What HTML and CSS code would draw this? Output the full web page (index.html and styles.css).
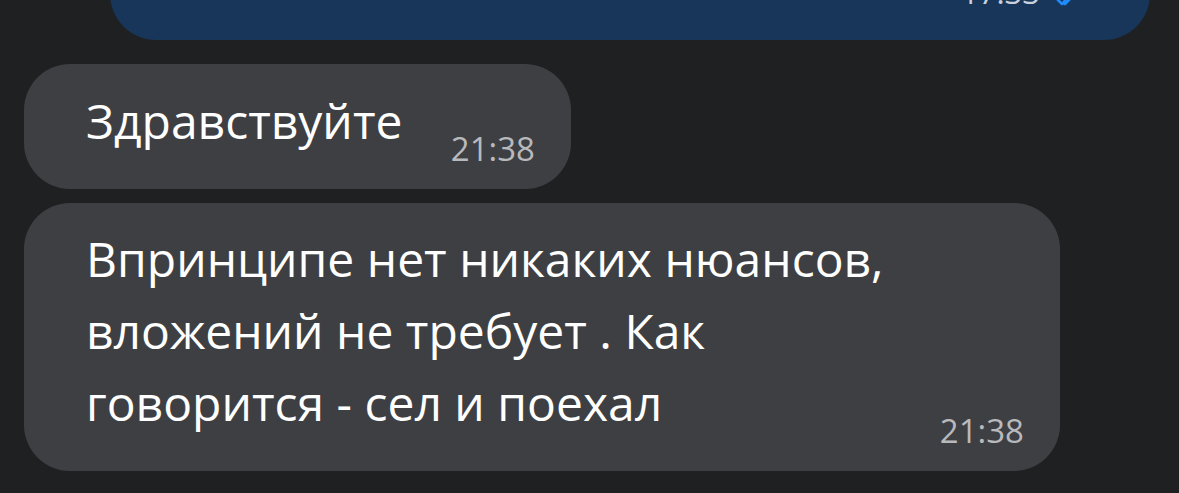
FILE: index.html
```html
<!DOCTYPE html>
<html lang="ru">
<head>
<meta charset="utf-8">
<link rel="stylesheet" href="styles.css">
</head>
<body>
<div class="chat">
  <div class="bubble out">
    <div class="meta out-meta">
      <span class="time">17:33</span>
      <svg class="checks" width="22" height="16" viewBox="0 0 22 16"><path d="M1 8l5 5L15 3M8 12l1 1L19 3" fill="none" stroke="#1e8bff" stroke-width="2.6" stroke-linecap="round" stroke-linejoin="round"/></svg>
    </div>
  </div>
  <div class="bubble in short">
    <div class="text">Здравствуйте</div>
    <div class="time">21:38</div>
  </div>
  <div class="bubble in long">
    <div class="text">Впринципе нет никаких нюансов,<br>вложений не требует . Как<br>говорится - сел и поехал</div>
    <div class="time">21:38</div>
  </div>
</div>
</body>
</html>
```
FILE: styles.css
```css
html, body {
  margin: 0;
  padding: 0;
  background: #1f2022;
  height: 100%;
  overflow: hidden;
}
.chat {
  display: flex;
  flex-direction: column;
  align-items: flex-start;
  gap: 14px;
  padding: 0 24px;
  font-family: "Open Sans", "Noto Sans", sans-serif;
}
.bubble {
  border-radius: 46px;
  display: flex;
  align-items: flex-end;
  box-sizing: border-box;
}
.out {
  background: #17365a;
  align-self: stretch;
  margin: -80px 5px 10px 86px;
  height: 120px;
  justify-content: flex-end;
  padding: 0 72px 28px 0;
}
.out-meta {
  display: flex;
  align-items: flex-end;
  gap: 16px;
}
.out-meta .time {
  color: #c9d1dc;
  font-size: 31px;
  line-height: 40px;
}
.checks {
  display: block;
  margin-bottom: 5px;
}
.in {
  background: #3e3f43;
  color: #ffffff;
}
.text {
  font-size: 48px;
  line-height: 72px;
}
.time {
  color: #b8b9bc;
  font-size: 33px;
  line-height: 40px;
}
.short {
  width: 547px;
  height: 125px;
  padding: 0 36px 20px 62px;
  justify-content: space-between;
}
.short .text {
  margin-bottom: 12px;
}
.long {
  width: 1036px;
  height: 268px;
  padding: 0 36px 20px 62px;
  justify-content: space-between;
}
.long .text {
  margin-bottom: 12px;
}
```
